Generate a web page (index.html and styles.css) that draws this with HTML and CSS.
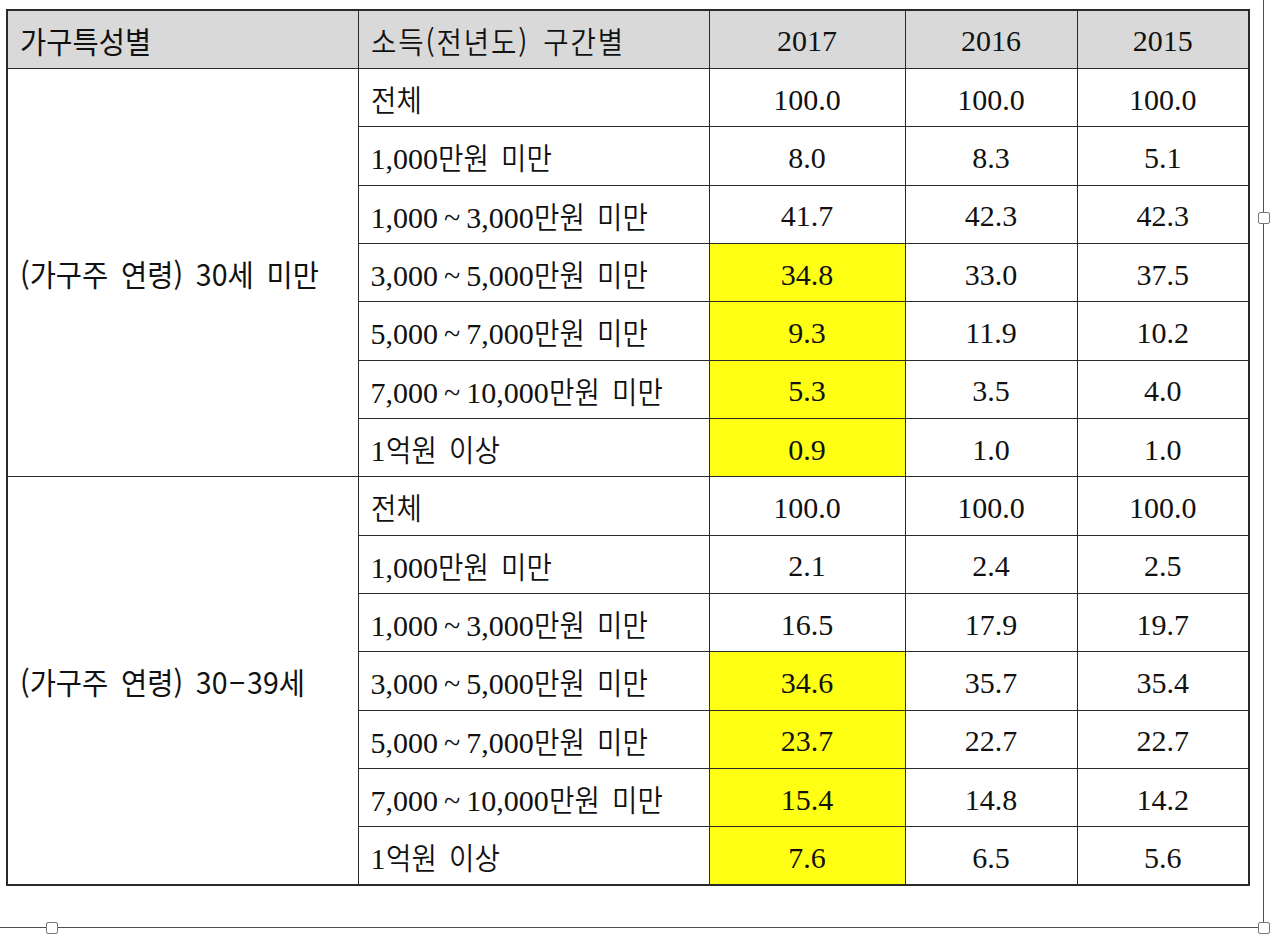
FILE: index.html
```html
<!DOCTYPE html>
<html lang="ko">
<head>
<meta charset="utf-8">
<link rel="stylesheet" href="styles.css">
</head>
<body>
<div class="page">
  <table class="stats">
    <colgroup>
      <col class="c1"><col class="c2"><col class="c3"><col class="c4"><col class="c5">
    </colgroup>
    <thead>
      <tr>
        <th class="group"><span class="gk">가구특성별</span></th>
        <th class="label"><span class="ko wide">소득(전년도) 구간별</span></th>
        <th class="num">2017</th>
        <th class="num">2016</th>
        <th class="num">2015</th>
      </tr>
    </thead>
    <tbody>
      <tr><td class="group" rowspan="7"><span class="gk">(가구주 연령) 30세 미만</span></td><td class="label"><span class="ko">전체</span></td><td class="num">100.0</td><td class="num">100.0</td><td class="num">100.0</td></tr>
      <tr><td class="label">1,000<span class="ko">만원 미만</span></td><td class="num">8.0</td><td class="num">8.3</td><td class="num">5.1</td></tr>
      <tr><td class="label">1,000<span class="til">~</span>3,000<span class="ko">만원 미만</span></td><td class="num">41.7</td><td class="num">42.3</td><td class="num">42.3</td></tr>
      <tr><td class="label">3,000<span class="til">~</span>5,000<span class="ko">만원 미만</span></td><td class="num hl">34.8</td><td class="num">33.0</td><td class="num">37.5</td></tr>
      <tr><td class="label">5,000<span class="til">~</span>7,000<span class="ko">만원 미만</span></td><td class="num hl">9.3</td><td class="num">11.9</td><td class="num">10.2</td></tr>
      <tr><td class="label">7,000<span class="til">~</span>10,000<span class="ko">만원 미만</span></td><td class="num hl">5.3</td><td class="num">3.5</td><td class="num">4.0</td></tr>
      <tr><td class="label">1<span class="ko">억원 이상</span></td><td class="num hl">0.9</td><td class="num">1.0</td><td class="num">1.0</td></tr>
      <tr><td class="group" rowspan="7"><span class="gk">(가구주 연령) 30<span class="dash">−</span>39세</span></td><td class="label"><span class="ko">전체</span></td><td class="num">100.0</td><td class="num">100.0</td><td class="num">100.0</td></tr>
      <tr><td class="label">1,000<span class="ko">만원 미만</span></td><td class="num">2.1</td><td class="num">2.4</td><td class="num">2.5</td></tr>
      <tr><td class="label">1,000<span class="til">~</span>3,000<span class="ko">만원 미만</span></td><td class="num">16.5</td><td class="num">17.9</td><td class="num">19.7</td></tr>
      <tr><td class="label">3,000<span class="til">~</span>5,000<span class="ko">만원 미만</span></td><td class="num hl">34.6</td><td class="num">35.7</td><td class="num">35.4</td></tr>
      <tr><td class="label">5,000<span class="til">~</span>7,000<span class="ko">만원 미만</span></td><td class="num hl">23.7</td><td class="num">22.7</td><td class="num">22.7</td></tr>
      <tr><td class="label">7,000<span class="til">~</span>10,000<span class="ko">만원 미만</span></td><td class="num hl">15.4</td><td class="num">14.8</td><td class="num">14.2</td></tr>
      <tr><td class="label">1<span class="ko">억원 이상</span></td><td class="num hl">7.6</td><td class="num">6.5</td><td class="num">5.6</td></tr>
    </tbody>
  </table>
  <div class="frame">
    <span class="handle h-right"></span>
    <span class="handle h-bl"></span>
    <span class="handle h-br"></span>
  </div>
</div>
</body>
</html>
```

FILE: styles.css
```css
html, body {
  margin: 0;
  padding: 0;
  background: #ffffff;
}

.page {
  position: relative;
  width: 1280px;
  height: 940px;
  padding: 9px 0 0 6px;
  box-sizing: border-box;
}

.stats {
  border-collapse: collapse;
  table-layout: fixed;
  width: 1243px;
  border: 2px solid #2a2a2a;
  color: #111111;
  font-family: "Liberation Serif", serif;
  font-size: 30px;
}

.c1 { width: 351px; }
.c2 { width: 351px; }
.c3 { width: 196px; }
.c4 { width: 172px; }
.c5 { width: 172px; }

.stats tr {
  height: 58.35px;
}

.stats th,
.stats td {
  border: 1.6px solid #2a2a2a;
  padding: 4px 12px 0;
  font-weight: normal;
  line-height: 1;
  vertical-align: middle;
  white-space: nowrap;
}

.stats thead th {
  background: #d9d9d9;
}

.group {
  text-align: left;
}

.gk {
  display: inline-block;
  font-family: "Noto Sans CJK KR", "Liberation Sans", sans-serif;
  font-size: 30px;
  word-spacing: 5px;
  transform: scaleX(0.95);
  transform-origin: left center;
}

.dash {
  margin: 0 2px;
}

.label {
  text-align: left;
  padding-left: 13px;
}

.ko {
  display: inline-block;
  font-family: "Noto Sans CJK KR", sans-serif;
  font-size: 30px;
  font-weight: 350;
  word-spacing: 5px;
  transform: scaleX(0.92);
  transform-origin: left center;
}

.ko.wide {
  letter-spacing: 2px;
}

.til {
  margin: 0 6px;
}

.num {
  text-align: center;
}

.hl {
  background: #ffff14;
}

.frame {
  position: absolute;
  left: 0;
  top: 0;
  width: 1264px;
  height: 928px;
  border-right: 1.5px solid #505050;
  border-bottom: 1.5px solid #505050;
  box-sizing: border-box;
  pointer-events: none;
}

.handle {
  position: absolute;
  width: 12px;
  height: 12px;
  background: #ffffff;
  border: 1px solid #777777;
  border-radius: 2px;
  box-sizing: border-box;
}

.h-right { right: -7px; top: 212px; }
.h-bl { left: 46px; bottom: -7px; }
.h-br { right: -7px; bottom: -7px; }
```
